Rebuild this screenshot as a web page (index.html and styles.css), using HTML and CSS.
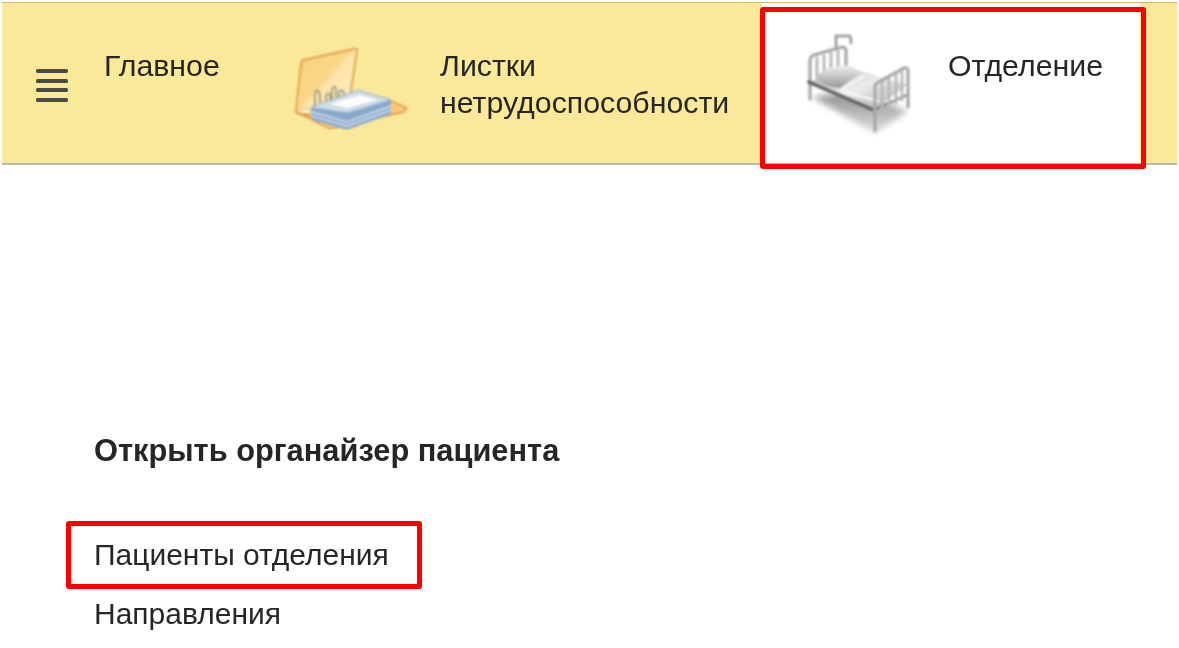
FILE: index.html
```html
<!DOCTYPE html>
<html lang="ru">
<head>
<meta charset="utf-8">
<title>Отделение</title>
<link rel="stylesheet" href="styles.css">
</head>
<body>
<svg class="defs" width="0" height="0">
  <defs>
    <filter id="soft"><feGaussianBlur stdDeviation="0.8"/></filter>
    <filter id="softer"><feGaussianBlur stdDeviation="3"/></filter>
    <linearGradient id="coverBack" x1="0" y1="0" x2="1" y2="1">
      <stop offset="0" stop-color="#f8cf78"/>
      <stop offset="0.47" stop-color="#fad88a"/>
      <stop offset="0.5" stop-color="#fde3a8"/>
      <stop offset="1" stop-color="#fef0d0"/>
    </linearGradient>
    <linearGradient id="mattress" x1="0" y1="0" x2="1" y2="1">
      <stop offset="0" stop-color="#b4b4b4"/>
      <stop offset="0.5" stop-color="#ececec"/>
      <stop offset="1" stop-color="#a8a8a8"/>
    </linearGradient>
    <linearGradient id="pillow" x1="0" y1="0" x2="0" y2="1">
      <stop offset="0" stop-color="#f0f0f0"/>
      <stop offset="1" stop-color="#969696"/>
    </linearGradient>
    <linearGradient id="bedShadow" x1="0" y1="0" x2="0" y2="1">
      <stop offset="0" stop-color="#8e8e8e"/>
      <stop offset="1" stop-color="#dedede"/>
    </linearGradient>
  </defs>
</svg>

<header class="topbar">
  <button class="burger" aria-label="Меню">
    <svg width="34" height="36" viewBox="0 0 34 36">
      <g fill="#4a4a4a">
        <rect x="1" y="2" width="32" height="4" rx="1.5"/>
        <rect x="1" y="12" width="32" height="4" rx="1.5"/>
        <rect x="1" y="21" width="32" height="4" rx="1.5"/>
        <rect x="1" y="31" width="32" height="4" rx="1.5"/>
      </g>
    </svg>
  </button>
  <div class="tab tab-main"><span class="tab-label">Главное</span></div>
  <div class="tab tab-sick">
    <svg class="tab-icon" width="130" height="90" viewBox="0 0 130 90">
      <path d="M100 66 L122 69 L112 74 L95 74 Z" fill="#d9c88c" filter="url(#softer)"/>
      <g filter="url(#soft)">
        <path d="M100 58 L122 68 L118 72 L45 89 L11 72 Z" fill="#f5c878" stroke="#dd9a45" stroke-width="1.4"/>
        <path d="M18 20 Q17 21 16 24 L11 70 Q11 73 14 74 L28 76 L65 57 L72 10 Q72 8 69 9 Z" fill="url(#coverBack)" stroke="#dc9a45" stroke-width="1.8"/>
        <ellipse cx="20" cy="71" rx="6" ry="2.5" fill="#fff3cf" stroke="#d2a75c"/>
        <path d="M26 68 L27 80 L62 90 L106 74 L106 60 L62 72 Z" fill="#86a9cc"/>
        <path d="M27 72 L62 82 L106 66 M27 76 L62 86 L106 70" fill="none" stroke="#d3e1ec" stroke-width="1.4"/>
        <path d="M26 67 L73 50 L106 60 L62 73 Z" fill="#cfdde8" stroke="#93b0cc"/>
        <path d="M45 64 L75 55 L92 60 L62 68 Z" fill="#fdfdfd"/>
        <g fill="none" stroke="#a09b82" stroke-width="2">
          <path d="M30 66 V54 Q30 50 33 51 Q35 52 35 56 V63"/>
          <path d="M41 62 V56 Q42 52 44 54 Q46 55 45 60"/>
          <path d="M47 60 V49 Q49 45 51 48 V58"/>
          <path d="M54 58 V52 Q56 49 58 51 L59 56"/>
        </g>
      </g>
    </svg>
    <span class="tab-label">Листки<br>нетрудоспособности</span>
  </div>
  <div class="tab tab-ward">
    <svg class="tab-icon" width="130" height="115" viewBox="0 0 130 115">
      <path d="M17 72 L80 108 L113 86 L60 66 Z" fill="url(#bedShadow)" filter="url(#softer)"/>
      <g filter="url(#soft)" fill="none" stroke-linecap="round">
        <path d="M41 24 V11 H55 Q56 11 56 18" stroke="#a0a0a0" stroke-width="3"/>
        <path d="M15 74 V36 Q15 31 19 30 L47 22 Q51 22 51 26 V52" stroke="#a8a8a8" stroke-width="3.2"/>
        <path d="M22 33 V58 M29 31 V54 M36 28 V50 M43 26 V46" stroke="#b4b4b4" stroke-width="2.8"/>
        <path d="M15 57 L52 42 L112 60 L80 83 Z" fill="url(#mattress)" stroke="none"/>
        <path d="M22 51 Q33 39 55 41 Q64 44 62 50 L45 63 Q29 62 22 55 Z" fill="url(#pillow)" stroke="none"/>
        <path d="M48 64 L70 50 M46 66 L84 76" stroke="#fafafa" stroke-width="2"/>
        <path d="M14 57 L79 85" stroke="#666" stroke-width="4"/>
        <path d="M79 85 L112 70" stroke="#858585" stroke-width="2.4"/>
        <path d="M80 106 V62 Q80 58 84 57 L109 43 Q113 42 113 46 V82" stroke="#a8a8a8" stroke-width="3.2"/>
        <path d="M87 58 V85 M94 54 V81 M101 50 V78 M107 47 V75" stroke="#b8b8b8" stroke-width="2.8"/>
      </g>
    </svg>
    <span class="tab-label">Отделение</span>
  </div>
</header>

<main class="content">
  <h2 class="group-title">Открыть органайзер пациента</h2>
  <ul class="links">
    <li>Пациенты отделения</li>
    <li>Направления</li>
  </ul>
</main>

<div class="mark mark-tab"></div>
<div class="mark mark-link"></div>
</body>
</html>
```

FILE: styles.css
```css
html, body{
    margin:0;
    padding:0;
    background:#fff;
}
body{
    position:relative;
    width:1179px;
    height:648px;
    overflow:hidden;
    font-family:"Liberation Sans", Arial, sans-serif;
    color:#262626;
}
.defs{
    display:block;
    height:0;
}
.topbar{
    display:flex;
    height:160px;
    margin:2px 2px 0 2px;
    background:#fbe99a;
    border-top:1px solid #c9b96a;
    border-bottom:2px solid #b8b8ae;
    box-sizing:content-box;
}
.burger{
    width:34px;
    height:36px;
    margin:64px 0 0 33px;
    padding:0;
    border:0;
    background:none;
    filter:blur(.5px);
}
.burger svg{
    display:block;
}
.tab{
    font-size:30.3px;
    line-height:37px;
    display:flex;
    align-items:flex-start;
}
.tab-label{
    display:block;
    filter:blur(.3px);
}
.tab-main{
    margin-left:35px;
    padding-top:44px;
    width:181px;
}
.tab-sick{
    width:477px;
    padding-top:44px;
}
.tab-sick .tab-icon{
    margin:-7px 25px 0 0;
    flex:none;
}
.tab-ward{
    flex:1;
    background:#fff;
    margin-right:37px;
    padding:22px 0 0 33px;
}
.tab-ward .tab-icon{
    flex:none;
    margin-right:23px;
}
.tab-ward .tab-label{
    padding-top:22px;
}
.content{
    padding:267px 0 0 94px;
    filter:blur(.3px);
}
.group-title{
    margin:0;
    font-size:30.8px;
    line-height:37px;
    font-weight:bold;
}
.links{
    list-style:none;
    margin:67px 0 0 0;
    padding:0;
    font-size:30px;
}
.links li{
    line-height:37px;
    margin-bottom:22px;
}
.mark{
    position:absolute;
    box-sizing:border-box;
    border:5px solid #f00;
    border-radius:3px;
}
.mark-tab{
    left:760px;
    top:7px;
    width:386px;
    height:162px;
}
.mark-link{
    left:66px;
    top:521px;
    width:356px;
    height:68px;
}
```
